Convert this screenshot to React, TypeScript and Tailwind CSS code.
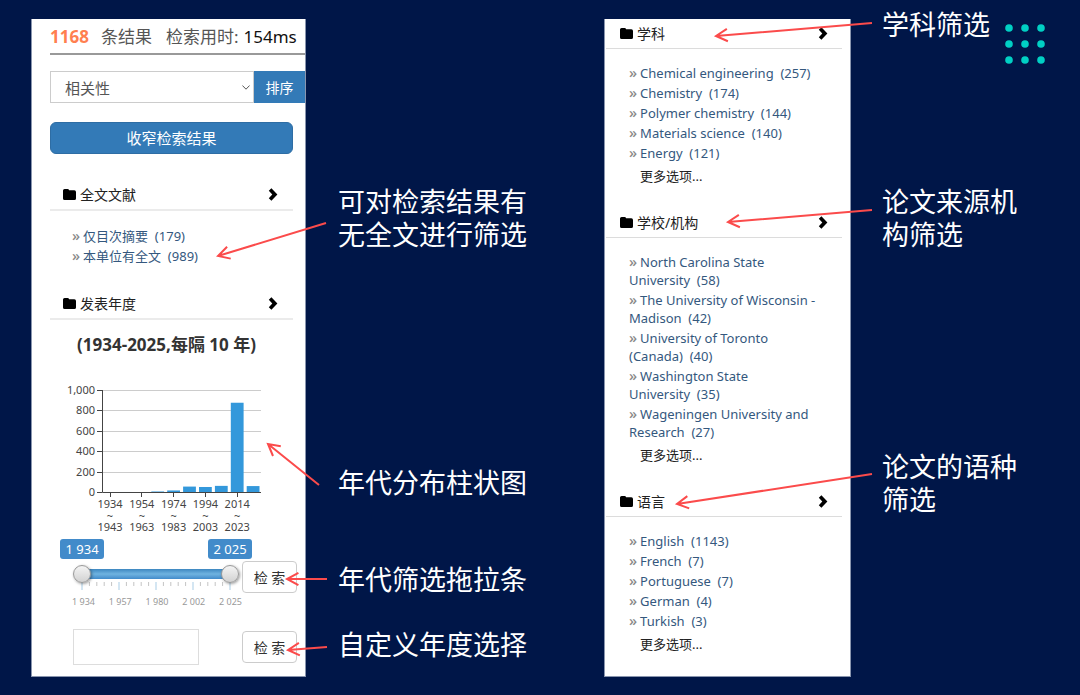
import React, { useState } from "react";

type Point = [number, number];
type Entry = { name: string; count: number };

const subjects: Entry[] = [
  { name: "Chemical engineering", count: 257 },
  { name: "Chemistry", count: 174 },
  { name: "Polymer chemistry", count: 144 },
  { name: "Materials science", count: 140 },
  { name: "Energy", count: 121 },
];

const schools: Entry[] = [
  { name: "North Carolina State University", count: 58 },
  { name: "The University of Wisconsin - Madison", count: 42 },
  { name: "University of Toronto (Canada)", count: 40 },
  { name: "Washington State University", count: 35 },
  { name: "Wageningen University and Research", count: 27 },
];

const languages: Entry[] = [
  { name: "English", count: 1143 },
  { name: "French", count: 7 },
  { name: "Portuguese", count: 7 },
  { name: "German", count: 4 },
  { name: "Turkish", count: 3 },
];

const fullText: Entry[] = [
  { name: "仅目次摘要", count: 179 },
  { name: "本单位有全文", count: 989 },
];

const decades = [
  { from: 1934, to: 1943, value: 3 },
  { from: 1944, to: 1953, value: 5 },
  { from: 1954, to: 1963, value: 2 },
  { from: 1964, to: 1973, value: 10 },
  { from: 1974, to: 1983, value: 20 },
  { from: 1984, to: 1993, value: 58 },
  { from: 1994, to: 2003, value: 54 },
  { from: 2004, to: 2013, value: 65 },
  { from: 2014, to: 2023, value: 880 },
  { from: 2024, to: 2025, value: 63 },
];

/* Arrow drawn from one point to another, measured from the note's top left corner. */
function Arrow({ from, to }: { from: Point; to: Point }) {
  const angle = Math.atan2(from[1] - to[1], from[0] - to[0]);
  const barb = (spread: number) =>
    `${to[0] + 13 * Math.cos(angle + spread)} ${to[1] + 13 * Math.sin(angle + spread)}`;
  return (
    <svg className="pointer-events-none absolute top-0 left-0 h-px w-px overflow-visible" fill="none" stroke="#fb4b4b" strokeWidth="2" aria-hidden="true">
      <path d={`M${from[0]} ${from[1]}L${to[0]} ${to[1]}M${barb(0.5)}L${to[0]} ${to[1]}L${barb(-0.5)}`} />
    </svg>
  );
}

function Note({ lines, from, to }: { lines: string[]; from: Point; to: Point }) {
  return (
    <p className="relative text-[27px] leading-[33px] whitespace-nowrap text-white">
      {lines.map((line) => (
        <span key={line} className="block">{line}</span>
      ))}
      <Arrow from={from} to={to} />
    </p>
  );
}

function SectionHeader({ title, size }: { title: string; size: "large" | "small" }) {
  return (
    <h2
      className={
        size === "large"
          ? "flex h-8 items-center border-b-2 border-[#ebebeb] pr-[15px] pl-[13px] text-[14px] text-[#222]"
          : "flex h-[30px] items-center border-b border-[#dcdcdc] pr-[14px] pl-[14px] text-[14px] text-[#222]"
      }
    >
      <svg viewBox="0 0 13 11" className="mr-1 h-[11px] w-[13px]" aria-hidden="true">
        <path d="M0 1.6Q0 0 1.6 0H4.6Q5.8 0 6.1 1.3H11.4Q13 1.3 13 2.9V9.4Q13 11 11.4 11H1.6Q0 11 0 9.4Z" />
      </svg>
      <span>{title}</span>
      <svg viewBox="0 0 10 13" className="ml-auto h-[13px] w-[10px]" aria-hidden="true">
        <path d="M3.4 .3L9.4 6.5L3.4 12.7L.8 10.2L4.3 6.5L.8 2.8Z" />
      </svg>
    </h2>
  );
}

function EntryList({ entries }: { entries: Entry[] }) {
  return (
    <ul className="flex flex-col gap-[2px] text-[13px] leading-[18px] text-[#34587e]">
      {entries.map(({ name, count }) => (
        <li key={name}>
          <a href="#results" className="before:mr-[3px] before:text-[15px] before:leading-none before:font-medium before:text-[#888] before:content-['»']">
            {`${name}\u00a0\u00a0(${count})`}
          </a>
        </li>
      ))}
    </ul>
  );
}

function Facet({ title, entries }: { title: string; entries: Entry[] }) {
  return (
    <section>
      <SectionHeader title={title} size="small" />
      <div className="pt-[15px] pr-5 pl-[23px]">
        <EntryList entries={entries} />
        <button type="button" className="mt-1 ml-[11px] block h-5 text-[13px] leading-5 text-[#222]">更多选项...</button>
      </div>
    </section>
  );
}

function DecadeChart() {
  const left = 52;
  const base = 111;
  const band = 15.9;
  return (
    <svg viewBox="0 0 243 154" className="mt-6 w-full" role="img" aria-label="年代分布柱状图">
      {[0, 200, 400, 600, 800, 1000].map((v) => {
        const y = Math.round(base - v * 0.102) + 0.5;
        return (
          <g key={v}>
            <path d={`M${left} ${y}H211`} stroke="#ccc" />
            <path d={`M${left - 5} ${y}H${left}`} stroke="#444" />
            <text x="45" y={y + 3} textAnchor="end" fontSize="11" fill="#444">{v.toLocaleString("en-US")}</text>
          </g>
        );
      })}
      {decades.map(({ from, to, value }, i) => (
        <g key={from}>
          <rect x={left + i * band + 1.6} y={base + 0.5 - value * 0.102} width="12.8" height={value * 0.102} fill="#3398db" />
          {i % 2 === 0 && (
            <g>
              <path d={`M${Math.round(left + i * band + 7.5) + 0.5} ${base}v5`} stroke="#444" />
              <text textAnchor="middle" fontSize="11" fill="#444" y="127">
                <tspan x={left + i * band + 8}>{from}</tspan>
                <tspan x={left + i * band + 8} dy="12">~</tspan>
                <tspan x={left + i * band + 8} dy="11">{to}</tspan>
              </text>
            </g>
          )}
        </g>
      ))}
      <path d={`M${left}.5 9V${base}.5H211`} fill="none" stroke="#444" />
    </svg>
  );
}

const rangeInput =
  "pointer-events-none absolute inset-0 h-[18px] w-full appearance-none bg-transparent [&::-webkit-slider-thumb]:pointer-events-auto [&::-webkit-slider-thumb]:h-[18px] [&::-webkit-slider-thumb]:w-[18px] [&::-webkit-slider-thumb]:appearance-none [&::-webkit-slider-thumb]:rounded-full [&::-webkit-slider-thumb]:border [&::-webkit-slider-thumb]:border-[#999] [&::-webkit-slider-thumb]:bg-linear-to-b [&::-webkit-slider-thumb]:from-[#f4f4f4] [&::-webkit-slider-thumb]:to-[#d2d2d2] [&::-webkit-slider-thumb]:shadow-[1px_1px_3px_rgba(0,0,0,0.4)]";

const spaced = (year: number) => `${Math.floor(year / 1000)} ${String(year % 1000).padStart(3, "0")}`;

function YearSlider() {
  const [start, setStart] = useState(1934);
  const [end, setEnd] = useState(2025);
  return (
    <div className="w-[166px]">
      <div className="-mx-[13px] flex justify-between text-[13px] leading-5 text-white">
        <output className="w-11 rounded-[3px] bg-[#428bca] text-center">{spaced(start)}</output>
        <output className="w-11 rounded-[3px] bg-[#428bca] text-center">{spaced(end)}</output>
      </div>
      <div className="relative mt-[6px] flex h-[18px] items-center px-[9px]">
        <div className="h-[10px] flex-1 bg-linear-to-b from-[#3d87c0] via-[#6fb3e0] to-[#428bca]" />
        <input type="range" aria-label="起始年份" min={1934} max={2025} value={start} onChange={(e) => setStart(Math.min(Number(e.target.value), end))} className={rangeInput} />
        <input type="range" aria-label="结束年份" min={1934} max={2025} value={end} onChange={(e) => setEnd(Math.max(Number(e.target.value), start))} className={rangeInput} />
      </div>
      <svg viewBox="0 0 166 9" className="-mt-[2px] w-full" aria-hidden="true">
        {Array.from({ length: 21 }, (_, i) => (
          <path key={i} d={`M${9 + i * 7.4} 1v${i % 5 === 0 ? 8 : 4}`} stroke={i % 5 === 0 ? "#a9cde6" : "#c4c4c4"} />
        ))}
      </svg>
      <div className="mt-[6px] -mr-[3px] -ml-px flex justify-between text-[9px] leading-3 text-[#999]">
        {[1934, 1957, 1980, 2002, 2025].map((year) => (
          <span key={year}>{spaced(year)}</span>
        ))}
      </div>
    </div>
  );
}

function SearchButton() {
  return (
    <button type="button" className="h-8 w-[55px] shrink-0 rounded-[4px] border border-[#ccc] bg-white text-[14px] text-[#333]">检 索</button>
  );
}

export default function App() {
  return (
    <main className="relative grid min-h-screen grid-cols-[275fr_298fr_247fr_229fr] items-start bg-[#001648] pl-[31px] font-['Noto_Sans','Noto_Sans_CJK_SC',sans-serif]">
      <div className="mt-[19px] min-h-[658px] border border-t-0 border-[#8995ae] bg-white pl-[18px]">
        <div className="flex h-9 items-center border-b-2 border-[#999] pt-[2px] text-[17px] whitespace-nowrap text-[#555]">
          <strong className="mr-3 text-[#ff7f50]">1168</strong>
          <span>条结果</span>
          <span className="ml-[14px]">检索用时:</span>
          <span className="ml-[5px] text-[#111]">154ms</span>
        </div>
        <form className="mt-4 flex h-8" onSubmit={(e) => e.preventDefault()}>
          <div className="relative flex-1">
            <select aria-label="排序方式" className="h-full w-full appearance-none border border-[#ccc] bg-white pt-[3px] pl-[14px] text-[15px] text-[#555]">
              <option>相关性</option>
            </select>
            <svg viewBox="0 0 8 5" className="pointer-events-none absolute top-[14px] right-1 h-[5px] w-2" fill="none" stroke="#555" aria-hidden="true">
              <path d="M.4 .5L4 4.2L7.6 .5" />
            </svg>
          </div>
          <button type="submit" className="w-[51px] bg-[#337ab7] text-[14px] text-white">排序</button>
        </form>
        <div className="pr-3">
          <button type="button" className="mt-[19px] h-8 w-full rounded-md border border-[#2e6da4] bg-[#337ab7] text-[15px] text-white">收窄检索结果</button>
          <section className="mt-[25px]">
            <SectionHeader title="全文文献" size="large" />
            <div className="pt-4 pl-[22px]">
              <EntryList entries={fullText} />
            </div>
          </section>
          <section className="mt-[23px]">
            <SectionHeader title="发表年度" size="large" />
            <h3 className="mt-[13px] pr-[10px] text-center text-[17px] leading-6 font-bold text-[#333]">(1934-2025,每隔 10 年)</h3>
            <DecadeChart />
          </section>
        </div>
        <form className="mt-1 flex items-start justify-between pr-2 pl-[23px]" onSubmit={(e) => e.preventDefault()}>
          <YearSlider />
          <div className="mt-[22px]"><SearchButton /></div>
        </form>
        <form className="mt-[21px] flex items-center justify-between pr-2 pl-[23px]" onSubmit={(e) => e.preventDefault()}>
          <input type="text" aria-label="自定义年度" className="h-9 w-[126px] border border-[#ddd] px-2 text-[14px]" />
          <SearchButton />
        </form>
      </div>

      <div className="pt-[185px] pl-8">
        <Note lines={["可对检索结果有", "无全文进行筛选"]} from={[-12, 38]} to={[-120, 71]} />
        <div className="mt-[215px]">
          <Note lines={["年代分布柱状图"]} from={[-19, 19]} to={[-70, -22]} />
        </div>
        <div className="mt-16">
          <Note lines={["年代筛选拖拉条"]} from={[-11, 16]} to={[-51, 16]} />
        </div>
        <div className="mt-8">
          <Note lines={["自定义年度选择"]} from={[-11, 19]} to={[-50, 22]} />
        </div>
      </div>

      <div className="mt-[19px] flex min-h-[658px] flex-col gap-[22px] border border-t-0 border-[#8995ae] bg-white pr-2 pl-px">
        <Facet title="学科" entries={subjects} />
        <Facet title="学校/机构" entries={schools} />
        <Facet title="语言" entries={languages} />
      </div>

      <div className="pt-2 pl-[31px]">
        <Note lines={["学科筛选"]} from={[-10, 15]} to={[-166, 28]} />
        <div className="mt-[144px]">
          <Note lines={["论文来源机", "构筛选"]} from={[-10, 25]} to={[-154, 37]} />
        </div>
        <div className="mt-[199px]">
          <Note lines={["论文的语种", "筛选"]} from={[-10, 24]} to={[-205, 54]} />
        </div>
      </div>

      <svg viewBox="0 0 40 40" className="absolute top-6 right-[35px] size-10" fill="#00d0c4" aria-hidden="true">
        {[4, 20, 36].map((y) => [4, 20, 36].map((x) => <circle key={`${x}-${y}`} cx={x} cy={y} r="3.8" />))}
      </svg>
    </main>
  );
}
